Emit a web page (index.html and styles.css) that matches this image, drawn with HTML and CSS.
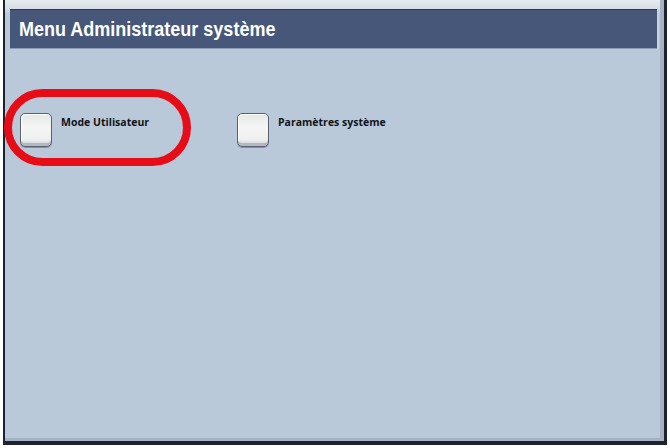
FILE: index.html
```html
<!DOCTYPE html>
<html lang="fr">
<head>
<meta charset="utf-8">
<title>Menu Administrateur système</title>
<link rel="stylesheet" href="styles.css">
</head>
<body>
<div class="frame">
  <div class="header"><h1 class="title">Menu Administrateur système</h1></div>
  <div class="content">
    <div class="option">
      <span class="btn"></span>
      <span class="label">Mode Utilisateur</span>
    </div>
    <div class="option">
      <span class="btn"></span>
      <span class="label">Paramètres système</span>
    </div>
    <div class="highlight"></div>
  </div>
</div>
</body>
</html>
```
FILE: styles.css
```css
html, body {
  margin: 0;
  padding: 0;
  background: #ffffff;
}
body {
  width: 670px;
  height: 448px;
  overflow: hidden;
}
.frame {
  position: relative;
  margin-left: 3px;
  width: 659px;
  height: 441px;
  border-left: 2px solid #1c2230;
  border-right: 3px solid #1c2230;
  border-bottom: 4px solid #1c2230;
  background: linear-gradient(to bottom, #e6ecf0 0px, #d6e0e8 8px, #b9c9da 14px, #b9c9da 100%);
  box-shadow: inset -4px -3px 0 #a4b2c4;
  display: flex;
  flex-direction: column;
}
.header {
  margin: 9px 7px 0 5px;
  height: 38px;
  background: #46577a;
  border-top: 1px solid #2c3858;
  border-bottom: 1px solid #8c9cb6;
  box-shadow: 2px 0 0 #c6d2e0;
  display: flex;
  align-items: center;
}
.title {
  margin: 0 0 0 9px;
  font-family: "Liberation Sans", Arial, sans-serif;
  font-weight: bold;
  font-size: 20px;
  color: #ffffff;
  transform: scaleX(0.9);
  transform-origin: left center;
  white-space: nowrap;
}
.content {
  position: relative;
  flex: 1;
  display: flex;
  align-items: flex-start;
  padding: 64px 0 0 15px;
}
.option {
  display: flex;
  align-items: flex-start;
  width: 217px;
}
.btn {
  box-sizing: border-box;
  width: 32px;
  height: 34px;
  border: 1px solid #5a6070;
  border-radius: 5px;
  background: linear-gradient(to bottom, #e6e8e8 0%, #f4f5f4 40%, #eef0ef 80%, #c8ccd2 100%);
  box-shadow: inset 0 -3px 0 #b4b8c2, inset 1px 1px 0 #ffffff, 0 1px 0 #8a92a0;
}
.label {
  margin: 2px 0 0 9px;
  font-family: "Open Sans", "DejaVu Sans", sans-serif;
  font-weight: bold;
  font-size: 10.5px;
  color: #101418;
}
.highlight {
  position: absolute;
  left: -1px;
  top: 40px;
  width: 171px;
  height: 61px;
  border: 8px solid #e60d16;
  border-radius: 40px;
}
```
